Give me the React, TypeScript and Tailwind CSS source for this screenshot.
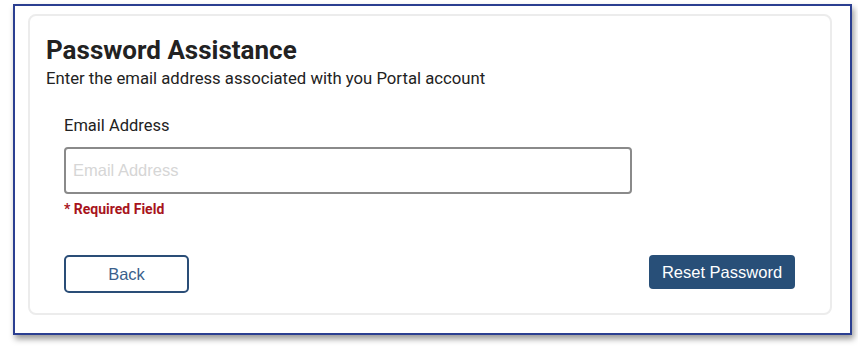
import React, { useState } from 'react';

const App: React.FC = () => {
  const [email, setEmail] = useState('');

  return (
    <div className="w-[858px] h-[349px] bg-white pt-[4px] pl-[13px]" style={{ fontFamily: 'Roboto, "Liberation Sans", sans-serif' }}>
      {/* Outer frame */}
      <div className="w-[839px] h-[331px] border-2 border-[#2b3f91] bg-white pt-[8px] pl-[13px] pr-[18px] shadow-[2px_4px_6px_rgba(0,0,0,0.4)]">
        {/* Card */}
        <div className="h-[301px] rounded-lg border-2 border-[#ececec] pl-[16px] pr-[35px] pt-[19px]">
          <h1 className="text-[26px] leading-[30px] font-bold text-[#222]">Password Assistance</h1>
          <p className="mt-[3px] text-[16.7px] leading-[22px] text-[#222]">
            Enter the email address associated with you Portal account
          </p>

          <div className="pl-[18px] mt-[25px]">
            <label className="block text-[16.5px] leading-[22px] text-[#222]">Email Address</label>
            <input
              type="email"
              value={email}
              onChange={(e) => setEmail(e.target.value)}
              placeholder="Email Address"
              className="mt-[10px] block w-[568px] h-[47px] rounded-[4px] border-2 border-[#8a8a8a] px-[7px] text-[16.5px] text-[#222] placeholder:text-[#d6d6d6] outline-none"
              style={{ fontFamily: '"Liberation Sans", Arial, sans-serif' }}
            />
            <p className="mt-[6px] text-[14px] leading-[18px] font-bold text-[#a8141c]">* Required Field</p>

            <div className="mt-[37px] flex items-start justify-between" style={{ fontFamily: '"Liberation Sans", Arial, sans-serif' }}>
              <button
                type="button"
                className="w-[125px] h-[38px] rounded-[5px] border-2 border-[#2a4d77] bg-white text-[16.5px] text-[#3b5f8c]"
              >
                Back
              </button>
              <button
                type="button"
                className="w-[146px] h-[34px] rounded-[4px] bg-[#284f78] text-[16.5px] text-white"
              >
                Reset Password
              </button>
            </div>
          </div>
        </div>
      </div>
    </div>
  );
};

export default App;
